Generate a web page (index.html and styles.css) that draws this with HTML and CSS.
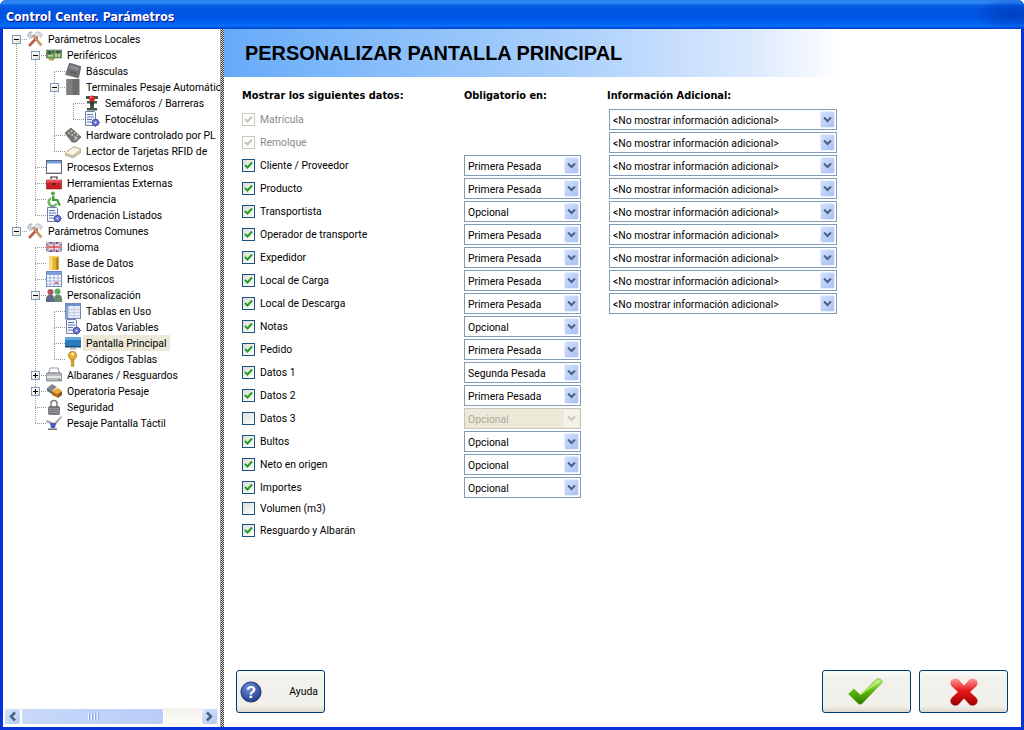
FILE: index.html
```html
<!DOCTYPE html>
<html lang="es">
<head>
  <meta charset="UTF-8">
  <meta name="viewport" content="width=device-width, initial-scale=1.0">
  <title>Control Center. Parámetros</title>
  <link rel="stylesheet" href="styles.css">
</head>
<body>
  <svg class="defs" width="0" height="0">
    <symbol id="i-tools" viewBox="0 0 16 16">
      <path d="M1.500 14 9.500 5.500l1.500 1.500-8 8.500z" fill="#c9573f" stroke="#8c3a2c" stroke-width=".5"/>
      <path d="M5.500 5.500 13.500 15l1.500-1.500L7 4z" fill="#d9a06e" stroke="#93603a" stroke-width=".5"/>
      <path d="M.8 4C.8 1.800 3 .3 5.300 1L3.700 2.800 4.500 4.500 6.300 3.800C6.800 6 4.800 7.500 3 7 1.700 6.600.8 5.500.8 4z" fill="#d4d8dc" stroke="#777d84" stroke-width=".5"/>
      <path d="M7.500 3.500 10.500.8c1.800 0 3.800 1.300 5 3.700l-1.500 1.700-2.500-1.700-1.500 1.500z" fill="#e1e4e8" stroke="#777d84" stroke-width=".5"/>
    </symbol>
    <symbol id="i-board" viewBox="0 0 16 16">
      <path d="M0 3h16v8H8v1.500H3V11H0z" fill="#6f9a68" stroke="#46684a" stroke-width=".5"/>
      <path d="M1.500 4h3.500v3H1.500zM6 4h2v2H6zM10 4h4.500v2H10z" fill="#3f5a46"/>
      <path d="M2 8h5v1.500H2zM9 7h2v3H9zM12 7h2v3h-2z" fill="#c3d58c"/>
      <path d="M3 12h5v1.500H3z" fill="#c9a93a"/>
    </symbol>
    <symbol id="i-scale" viewBox="0 0 16 16">
      <path d="M4.500 0 16 3.500 13.500 15 .5 11.500z" fill="#6f7175" stroke="#4a4c50" stroke-width=".5"/>
      <path d="M5.500 2 14 4.500l-.8 3L4.200 5.500z" fill="#8b8d91"/>
      <path d="M6 8.500h1.500v1.500H6zM9 9.500h1.500V11H9z" fill="#3a3c40"/>
    </symbol>
    <symbol id="i-terminal" viewBox="0 0 16 16">
      <path d="M1.500 0h13v16h-13z" fill="#6d6d6d"/>
      <path d="M1.500 0h6v16h-6z" fill="#7f7f7f"/>
      <rect x="10" y="6" width="1" height="1" fill="#d33"/>
    </symbol>
    <symbol id="i-light" viewBox="0 0 16 16">
      <path d="M2 1h12v3H10v2h3v2.500h-3V13h3v2.500H3V13h3V8.500H3V6h3V4H2z" fill="#46574a"/>
      <circle cx="8" cy="3.500" r="3" fill="#d62020"/>
      <circle cx="7" cy="2.500" r="1" fill="#f08a8a"/>
      <circle cx="8" cy="8.500" r="1.800" fill="#333"/>
    </symbol>
    <symbol id="i-doc" viewBox="0 0 16 16">
      <path d="M1.500 .5h9l1 1v13h-10z" fill="#f3f6fc" stroke="#6c7fa9"/>
      <path d="M3 3h6v1H3zM3 5.500h7v1H3zM3 8h5v1H3zM3 10.500h4v1H3z" fill="#5a74b8"/>
      <circle cx="11.500" cy="11.500" r="3.300" fill="#6a72d0" stroke="#474fa4"/>
      <path d="M11 7h1v2h-1zM11 14h1v2h-1zM7 11h2v1H7zM14 11h2v1h-2z" fill="#5a63c4"/>
      <circle cx="11.500" cy="11.500" r="1" fill="#e4e7fb"/>
    </symbol>
    <symbol id="i-keypad" viewBox="0 0 16 16">
      <path d="M0 6 6 1l10 9-5 5H7z" fill="#7b7773" stroke="#403e3c" stroke-width=".6"/>
      <path d="M3 6l1.300-1 1 1L4 7zM5.500 4l1.300-1 1 1-1.300 1zM6 8l1.300-1 1 1L7 9zM8.500 6l1.300-1 1 1-1.300 1zM9 10l1.300-1 1 1-1.300 1zM11.500 8l1.300-1 1 1-1.300 1z" fill="#dedbd7"/>
      <path d="M9 12.500l3-2.500 1 1-3 2.500z" fill="#c9c5c0"/>
    </symbol>
    <symbol id="i-reader" viewBox="0 0 16 16">
      <path d="M0 10 9 3.500 16 6v3.500l-8 5.500-8-3z" fill="#cfc4a8" stroke="#8e8672" stroke-width=".5"/>
      <path d="M1 10 9 4.500l6 2L8 12z" fill="#f8f4e8"/>
    </symbol>
    <symbol id="i-window" viewBox="0 0 16 16">
      <rect x=".5" y="1.500" width="15" height="13" fill="#fff" stroke="#5e6878"/>
      <rect x="1" y="2" width="14" height="2.500" fill="#6f9bd8"/>
      <rect x="1" y="13" width="14" height="1" fill="#c8ccd4"/>
    </symbol>
    <symbol id="i-toolbox" viewBox="0 0 16 16">
      <path d="M5 4V2h6v2" fill="none" stroke="#2d2d2d" stroke-width="1.200"/>
      <path d="M.5 5h15v9H.5z" fill="#cc1f24" stroke="#8a1216" stroke-width=".6"/>
      <path d="M1 5h14v2.500H1z" fill="#ee5054"/>
      <path d="M6.500 8h3v2h-3z" fill="#333"/>
    </symbol>
    <symbol id="i-wheel" viewBox="0 0 16 16">
      <circle cx="7" cy="2.500" r="2" fill="#5aa84d"/>
      <path d="M6 5h2.500v3H12l3 6.500h-2.500L10.500 10H6z" fill="#3f9a3c"/>
      <path d="M4.500 6.500a5 5 0 1 0 6.500 7l-1-1.300a3.300 3.300 0 1 1-5-4z" fill="#6fb85c" stroke="#2f7f33" stroke-width=".3"/>
    </symbol>
    <symbol id="i-flag" viewBox="0 0 16 16">
      <rect y="3" width="16" height="10" fill="#4a5fa8"/>
      <path d="M0 3 16 13M16 3 0 13" stroke="#fff" stroke-width="2"/>
      <path d="M0 3 16 13M16 3 0 13" stroke="#d2525a" stroke-width=".7"/>
      <path d="M6.500 3h3v10h-3zM0 6.500h16v3H0z" fill="#fff"/>
      <path d="M7.300 3h1.400v10H7.300zM0 7.300h16v1.400H0z" fill="#d2454c"/>
    </symbol>
    <symbol id="i-db" viewBox="0 0 16 16">
      <rect x="3.500" y="1" width="9" height="14" rx="1" fill="#e8b12a"/>
      <rect x="3.500" y="1" width="3" height="14" rx="1" fill="#f9dd82"/>
      <rect x="10.500" y="1" width="2" height="14" rx="1" fill="#a97a14"/>
      <rect x="3.500" y="1" width="9" height="1.500" fill="#f5d26a"/>
    </symbol>
    <symbol id="i-calendar" viewBox="0 0 16 16">
      <rect x=".5" y=".5" width="15" height="15" fill="#fff" stroke="#6f88c0"/>
      <rect x="1" y="1" width="14" height="3" fill="#7f9fe0"/>
      <path d="M1 7h14M1 10h14M1 13h14M4 4v11M8 4v11M12 4v11" stroke="#9db2dd" fill="none"/>
      <rect x="9" y="11" width="3" height="2" fill="#e0605c"/>
    </symbol>
    <symbol id="i-people" viewBox="0 0 16 16">
      <path d="M0 15v-3c0-3 2-4.500 4.500-4.500S8 9 8 12v3z" fill="#5a6a88"/>
      <path d="M8 15v-3c0-3 1.500-4.500 4-4.500s4 1.500 4 4.500v3z" fill="#6b8a6c"/>
      <circle cx="4.500" cy="5" r="3" fill="#b0555e"/>
      <circle cx="11.500" cy="4.500" r="3" fill="#5fae5c"/>
    </symbol>
    <symbol id="i-table" viewBox="0 0 16 16">
      <rect x=".5" y=".5" width="15" height="15" fill="#e6ecf8" stroke="#7088b8"/>
      <rect x="1" y="1" width="14" height="2" fill="#6d8fd0"/>
      <rect x="1" y="3" width="2.500" height="12" fill="#8aa6dc"/>
      <path d="M3.500 6.500h11.500M3.500 9.500h11.500M3.500 12.500h11.500M9 3v12" stroke="#c3cfe6" fill="none"/>
    </symbol>
    <symbol id="i-screen" viewBox="0 0 16 16">
      <rect y="2" width="16" height="10" fill="#2a7cc0"/>
      <rect y="2" width="16" height="3" fill="#68a7dc"/>
      <rect y="11" width="16" height="1.500" fill="#1e4a70"/>
      <rect x="5" y="13" width="6" height="1.500" fill="#b0b4ba"/>
    </symbol>
    <symbol id="i-key" viewBox="0 0 16 16">
      <circle cx="7.500" cy="4.500" r="4.200" fill="#e6b02f" stroke="#96701a" stroke-width=".6"/>
      <circle cx="7.500" cy="3" r="1.200" fill="#fff"/>
      <path d="M6 8h3v7L7.500 16 6 15v-1l1-.8-1-.7 1-.8-1-.7z" fill="#d79f22" stroke="#96701a" stroke-width=".4"/>
    </symbol>
    <symbol id="i-printer" viewBox="0 0 16 16">
      <path d="M4 1h8l1.500 5h-11z" fill="#fff" stroke="#6c7076" stroke-width=".7"/>
      <path d="M1 6h14l1 3v5H0V9z" fill="#b8bcc2" stroke="#5c6066" stroke-width=".6"/>
      <path d="M1 9h14v2H1z" fill="#e4e6ea"/>
      <rect x="12" y="12" width="2" height="1" fill="#38b038"/>
    </symbol>
    <symbol id="i-box" viewBox="0 0 16 16">
      <path d="M1 5 6 1l5 3-5 4z" fill="#85878c"/>
      <path d="M6 8l6-3 4 3-4 3z" fill="#eda83a"/>
      <path d="M6 8l6 3v4l-6-3z" fill="#b76d1e"/>
      <path d="M12 11l4-3v4l-4 3z" fill="#8d5316"/>
      <path d="M1 5l5 3v3L1 8z" fill="#66686d"/>
    </symbol>
    <symbol id="i-lock" viewBox="0 0 16 16">
      <path d="M5 8V4.500a3 3 0 0 1 6 0V8" fill="none" stroke="#7a7d82" stroke-width="1.500"/>
      <rect x="2.500" y="7.500" width="11" height="8" rx="1" fill="#75777b" stroke="#47494c" stroke-width=".5"/>
      <path d="M3 9.500h10M3 11.500h10M3 13.500h10" stroke="#95979b"/>
    </symbol>
    <symbol id="i-touch" viewBox="0 0 16 16">
      <path d="M1 5l7 3 7-7 1 1-7 9-9-4z" fill="#a4a6ac"/>
      <path d="M4 8h6l-1 5H5z" fill="#4a5ab8"/>
      <path d="M2 13.500h9V15H2z" fill="#6d7078"/>
    </symbol>
    <symbol id="i-chevron" viewBox="0 0 9 7">
      <path d="M1 1.500 4.500 5 8 1.500" fill="none" stroke="currentColor" stroke-width="2"/>
    </symbol>
    <symbol id="i-tick" viewBox="0 0 9 9">
      <path d="M1 4 3.500 6.500 8 1.500" fill="none" stroke="currentColor" stroke-width="2"/>
    </symbol>
  </svg>

  <div class="window">
    <div class="titlebar">Control Center. Parámetros</div>
    <div class="frame">

      <aside class="tree-pane">
        <div class="tree-scroll">
          <ul class="tree root">
            <li class="open stem">
              <div class="row"><i class="twisty minus"></i><svg class="ico"><use href="#i-tools"/></svg><span>Parámetros Locales</span></div>
              <ul class="tree">
                <li class="open stem">
                  <div class="row"><i class="twisty minus"></i><svg class="ico"><use href="#i-board"/></svg><span>Periféricos</span></div>
                  <ul class="tree">
                    <li class="stem"><div class="row"><svg class="ico"><use href="#i-scale"/></svg><span>Básculas</span></div></li>
                    <li class="open stem">
                      <div class="row"><i class="twisty minus"></i><svg class="ico"><use href="#i-terminal"/></svg><span>Terminales Pesaje Automátic</span></div>
                      <ul class="tree">
                        <li class="stem"><div class="row"><svg class="ico"><use href="#i-light"/></svg><span>Semáforos / Barreras</span></div></li>
                        <li><div class="row"><svg class="ico"><use href="#i-doc"/></svg><span>Fotocélulas</span></div></li>
                      </ul>
                    </li>
                    <li class="stem"><div class="row"><svg class="ico"><use href="#i-keypad"/></svg><span>Hardware controlado por PL</span></div></li>
                    <li><div class="row"><svg class="ico"><use href="#i-reader"/></svg><span>Lector de Tarjetas RFID de</span></div></li>
                  </ul>
                </li>
                <li class="stem"><div class="row"><svg class="ico"><use href="#i-window"/></svg><span>Procesos Externos</span></div></li>
                <li class="stem"><div class="row"><svg class="ico"><use href="#i-toolbox"/></svg><span>Herramientas Externas</span></div></li>
                <li class="stem"><div class="row"><svg class="ico"><use href="#i-wheel"/></svg><span>Apariencia</span></div></li>
                <li><div class="row"><svg class="ico"><use href="#i-doc"/></svg><span>Ordenación Listados</span></div></li>
              </ul>
            </li>
            <li class="open">
              <div class="row"><i class="twisty minus"></i><svg class="ico"><use href="#i-tools"/></svg><span>Parámetros Comunes</span></div>
              <ul class="tree">
                <li class="stem"><div class="row"><svg class="ico"><use href="#i-flag"/></svg><span>Idioma</span></div></li>
                <li class="stem"><div class="row"><svg class="ico"><use href="#i-db"/></svg><span>Base de Datos</span></div></li>
                <li class="stem"><div class="row"><svg class="ico"><use href="#i-calendar"/></svg><span>Históricos</span></div></li>
                <li class="open stem">
                  <div class="row"><i class="twisty minus"></i><svg class="ico"><use href="#i-people"/></svg><span>Personalización</span></div>
                  <ul class="tree">
                    <li class="stem"><div class="row"><svg class="ico"><use href="#i-table"/></svg><span>Tablas en Uso</span></div></li>
                    <li class="stem"><div class="row"><svg class="ico"><use href="#i-doc"/></svg><span>Datos Variables</span></div></li>
                    <li class="stem"><div class="row selected"><svg class="ico"><use href="#i-screen"/></svg><span>Pantalla Principal</span></div></li>
                    <li><div class="row"><svg class="ico"><use href="#i-key"/></svg><span>Códigos Tablas</span></div></li>
                  </ul>
                </li>
                <li class="stem"><div class="row"><i class="twisty plus"></i><svg class="ico"><use href="#i-printer"/></svg><span>Albaranes / Resguardos</span></div></li>
                <li class="stem"><div class="row"><i class="twisty plus"></i><svg class="ico"><use href="#i-box"/></svg><span>Operatoria Pesaje</span></div></li>
                <li class="stem"><div class="row"><svg class="ico"><use href="#i-lock"/></svg><span>Seguridad</span></div></li>
                <li><div class="row"><svg class="ico"><use href="#i-touch"/></svg><span>Pesaje Pantalla Táctil</span></div></li>
              </ul>
            </li>
          </ul>
        </div>
        <div class="hscroll">
          <button class="sb-btn"><svg width="9" height="11" viewBox="0 0 9 11"><path d="M7 1.500 3 5.500 7 9.500" fill="none" stroke="#4d6185" stroke-width="2.500"/></svg></button>
          <div class="sb-track">
            <div class="sb-thumb"><i></i><i></i><i></i><i></i></div>
          </div>
          <button class="sb-btn"><svg width="9" height="11" viewBox="0 0 9 11"><path d="M2 1.500 6 5.500 2 9.500" fill="none" stroke="#4d6185" stroke-width="2.500"/></svg></button>
        </div>
      </aside>

      <div class="splitter"></div>

      <main class="content">
        <h1 class="banner">PERSONALIZAR PANTALLA PRINCIPAL</h1>

        <div class="col-heads">
          <div class="col-a">Mostrar los siguientes datos:</div>
          <div class="col-b">Obligatorio en:</div>
          <div class="col-c">Información Adicional:</div>
        </div>

        <div class="fields">
          <div class="field">
            <label class="col-a muted"><i class="check off-on"><svg><use href="#i-tick"/></svg></i>Matrícula</label>
            <div class="col-b"></div>
            <div class="col-c"><div class="combo"><span>&lt;No mostrar información adicional&gt;</span><b><svg><use href="#i-chevron"/></svg></b></div></div>
          </div>
          <div class="field">
            <label class="col-a muted"><i class="check off-on"><svg><use href="#i-tick"/></svg></i>Remolque</label>
            <div class="col-b"></div>
            <div class="col-c"><div class="combo"><span>&lt;No mostrar información adicional&gt;</span><b><svg><use href="#i-chevron"/></svg></b></div></div>
          </div>
          <div class="field">
            <label class="col-a"><i class="check on"><svg><use href="#i-tick"/></svg></i>Cliente / Proveedor</label>
            <div class="col-b"><div class="combo"><span>Primera Pesada</span><b><svg><use href="#i-chevron"/></svg></b></div></div>
            <div class="col-c"><div class="combo"><span>&lt;No mostrar información adicional&gt;</span><b><svg><use href="#i-chevron"/></svg></b></div></div>
          </div>
          <div class="field">
            <label class="col-a"><i class="check on"><svg><use href="#i-tick"/></svg></i>Producto</label>
            <div class="col-b"><div class="combo"><span>Primera Pesada</span><b><svg><use href="#i-chevron"/></svg></b></div></div>
            <div class="col-c"><div class="combo"><span>&lt;No mostrar información adicional&gt;</span><b><svg><use href="#i-chevron"/></svg></b></div></div>
          </div>
          <div class="field">
            <label class="col-a"><i class="check on"><svg><use href="#i-tick"/></svg></i>Transportista</label>
            <div class="col-b"><div class="combo"><span>Opcional</span><b><svg><use href="#i-chevron"/></svg></b></div></div>
            <div class="col-c"><div class="combo"><span>&lt;No mostrar información adicional&gt;</span><b><svg><use href="#i-chevron"/></svg></b></div></div>
          </div>
          <div class="field">
            <label class="col-a"><i class="check on"><svg><use href="#i-tick"/></svg></i>Operador de transporte</label>
            <div class="col-b"><div class="combo"><span>Primera Pesada</span><b><svg><use href="#i-chevron"/></svg></b></div></div>
            <div class="col-c"><div class="combo"><span>&lt;No mostrar información adicional&gt;</span><b><svg><use href="#i-chevron"/></svg></b></div></div>
          </div>
          <div class="field">
            <label class="col-a"><i class="check on"><svg><use href="#i-tick"/></svg></i>Expedidor</label>
            <div class="col-b"><div class="combo"><span>Primera Pesada</span><b><svg><use href="#i-chevron"/></svg></b></div></div>
            <div class="col-c"><div class="combo"><span>&lt;No mostrar información adicional&gt;</span><b><svg><use href="#i-chevron"/></svg></b></div></div>
          </div>
          <div class="field">
            <label class="col-a"><i class="check on"><svg><use href="#i-tick"/></svg></i>Local de Carga</label>
            <div class="col-b"><div class="combo"><span>Primera Pesada</span><b><svg><use href="#i-chevron"/></svg></b></div></div>
            <div class="col-c"><div class="combo"><span>&lt;No mostrar información adicional&gt;</span><b><svg><use href="#i-chevron"/></svg></b></div></div>
          </div>
          <div class="field">
            <label class="col-a"><i class="check on"><svg><use href="#i-tick"/></svg></i>Local de Descarga</label>
            <div class="col-b"><div class="combo"><span>Primera Pesada</span><b><svg><use href="#i-chevron"/></svg></b></div></div>
            <div class="col-c"><div class="combo"><span>&lt;No mostrar información adicional&gt;</span><b><svg><use href="#i-chevron"/></svg></b></div></div>
          </div>
          <div class="field">
            <label class="col-a"><i class="check on"><svg><use href="#i-tick"/></svg></i>Notas</label>
            <div class="col-b"><div class="combo"><span>Opcional</span><b><svg><use href="#i-chevron"/></svg></b></div></div>
          </div>
          <div class="field">
            <label class="col-a"><i class="check on"><svg><use href="#i-tick"/></svg></i>Pedido</label>
            <div class="col-b"><div class="combo"><span>Primera Pesada</span><b><svg><use href="#i-chevron"/></svg></b></div></div>
          </div>
          <div class="field">
            <label class="col-a"><i class="check on"><svg><use href="#i-tick"/></svg></i>Datos 1</label>
            <div class="col-b"><div class="combo"><span>Segunda Pesada</span><b><svg><use href="#i-chevron"/></svg></b></div></div>
          </div>
          <div class="field">
            <label class="col-a"><i class="check on"><svg><use href="#i-tick"/></svg></i>Datos 2</label>
            <div class="col-b"><div class="combo"><span>Primera Pesada</span><b><svg><use href="#i-chevron"/></svg></b></div></div>
          </div>
          <div class="field">
            <label class="col-a"><i class="check"></i>Datos 3</label>
            <div class="col-b"><div class="combo disabled"><span>Opcional</span><b><svg><use href="#i-chevron"/></svg></b></div></div>
          </div>
          <div class="field">
            <label class="col-a"><i class="check on"><svg><use href="#i-tick"/></svg></i>Bultos</label>
            <div class="col-b"><div class="combo"><span>Opcional</span><b><svg><use href="#i-chevron"/></svg></b></div></div>
          </div>
          <div class="field">
            <label class="col-a"><i class="check on"><svg><use href="#i-tick"/></svg></i>Neto en origen</label>
            <div class="col-b"><div class="combo"><span>Opcional</span><b><svg><use href="#i-chevron"/></svg></b></div></div>
          </div>
          <div class="field h21">
            <label class="col-a"><i class="check on"><svg><use href="#i-tick"/></svg></i>Importes</label>
            <div class="col-b"><div class="combo"><span>Opcional</span><b><svg><use href="#i-chevron"/></svg></b></div></div>
          </div>
          <div class="field h22">
            <label class="col-a"><i class="check"></i>Volumen (m3)</label>
          </div>
          <div class="field">
            <label class="col-a"><i class="check on"><svg><use href="#i-tick"/></svg></i>Resguardo y Albarán</label>
          </div>
        </div>

        <div class="actions">
          <button class="btn btn-help">
            <svg width="22" height="22" viewBox="0 0 24 24">
              <defs>
                <radialGradient id="g-help" cx=".4" cy=".3" r=".8"><stop offset="0" stop-color="#6f8fdc"/><stop offset="1" stop-color="#17337f"/></radialGradient>
              </defs>
              <circle cx="12" cy="12" r="11" fill="url(#g-help)" stroke="#1b2f70"/>
              <text x="12" y="18" text-anchor="middle" class="help-mark">?</text>
            </svg>
            <span>Ayuda</span>
          </button>
          <div class="actions-right">
            <button class="btn btn-ok">
              <svg width="37" height="29" viewBox="0 0 38 30">
                <defs>
                  <linearGradient id="g-ok" x1="0" y1="0" x2="0" y2="1"><stop offset="0" stop-color="#b6f05e"/><stop offset=".5" stop-color="#5cb80a"/><stop offset="1" stop-color="#2a7a00"/></linearGradient>
                </defs>
                <path d="M1.500 17.500 7 12.500 13.500 18.500 30 2.500C32 .8 36 2 36.500 5.500L15.500 27.500C14.500 28.500 12.500 28.500 11.500 27.500z" fill="url(#g-ok)" stroke="#4c9a0c" stroke-width=".5"/>
                <path d="M14 15.500 30.500 4C32 3 34 3.500 34.500 5L14 19z" fill="#d8f8a8" opacity=".55"/>
              </svg>
            </button>
            <button class="btn">
              <svg width="30" height="28" viewBox="0 0 30 28">
                <defs>
                  <linearGradient id="g-no" x1="0" y1="0" x2="0" y2="1"><stop offset="0" stop-color="#ff9a9a"/><stop offset=".45" stop-color="#e81818"/><stop offset="1" stop-color="#9c0000"/></linearGradient>
                </defs>
                <path d="M1.500 5C1.500 2 4 .5 6.500 .5 8 .5 9 1 10 2L15 7.500 20 2C21 1 22 .5 23.500 .5 26 .5 28.500 2 28.500 5 28.500 6.500 28 7.500 27 8.500L21 14 27 19.500C28 20.500 28.500 21.500 28.500 23 28.500 26 26 27.500 23.500 27.500 22 27.500 21 27 20 26L15 20.500 10 26C9 27 8 27.500 6.500 27.500 4 27.500 1.500 26 1.500 23 1.500 21.500 2 20.500 3 19.500L9 14 3 8.500C2 7.500 1.500 6.500 1.500 5z" fill="url(#g-no)"/>
              </svg>
            </button>
          </div>
        </div>
      </main>
    </div>
  </div>
</body>
</html>
```

FILE: styles.css
```css
* {
  box-sizing: border-box;
}
html, body {
  margin: 0;
  padding: 0;
}
body {
  font-family: Roboto, "Liberation Sans", sans-serif;
  font-size: 10.400px;
  color: #000;
  background: #fff;
}
.defs {
  position: absolute;
}
.window {
  width: 1024px;
  height: 730px;
  display: flex;
  flex-direction: column;
  overflow: hidden;
  background: #0831d9;
  border-radius: 6px 6px 0 0;
}
.titlebar {
  height: 29px;
  flex: none;
  padding: 10px 0 0 6px;
  font-family: "DejaVu Sans Condensed", "DejaVu Sans", sans-serif;
  font-stretch: condensed;
  font-size: 12.200px;
  line-height: 15px;
  font-weight: bold;
  color: #fff;
  text-shadow: 1px 1px 0 #0f1089;
  background:
    radial-gradient(ellipse 40px 16px at 1012px 14px, #0040c0 0, rgba(0, 64, 192, 0) 100%),
    linear-gradient(to bottom, #2b7fee 0, #2f8bf6 3px, #0a62e8 5px, #0055e2 9px, #0054e3 17px, #0062f0 23px, #0a6ff8 26px, #0558e8 27px, #0042cc 29px);
}
.frame {
  flex: 1;
  min-height: 0;
  display: flex;
  padding: 0 3px 3px 3px;
}

/* arbol */
.tree-pane {
  width: 217px;
  flex: none;
  display: flex;
  flex-direction: column;
  background: #fff;
}
.tree-scroll {
  flex: 1;
  min-height: 0;
  overflow: hidden;
  padding: 2px 0 0 0;
}
.tree {
  list-style: none;
  margin: 0;
  padding: 0 0 0 19px;
}
.tree.root {
  padding-left: 13px;
  width: 215px;
}
.tree li {
  position: relative;
}
/* guias punteadas */
.tree li::before {
  content: "";
  position: absolute;
  left: 0;
  top: 8px;
  width: 11px;
  border-top: 1px dotted #9a9a9a;
}
.tree li.stem::after {
  content: "";
  position: absolute;
  left: 0;
  top: 8px;
  bottom: -8px;
  border-left: 1px dotted #9a9a9a;
}
.row {
  position: relative;
  z-index: 1;
  height: 16px;
  display: flex;
  align-items: center;
  padding-left: 11px;
  white-space: nowrap;
}
.row span {
  margin-left: 5px;
  padding-top: 1px;
  line-height: 15px;
}
.row.selected span {
  background: #ece9d8;
  padding: 1px 3px 0;
  margin-left: 2px;
}
.ico {
  width: 16px;
  height: 16px;
  flex: none;
}
.twisty {
  position: absolute;
  left: -4px;
  top: 4px;
  width: 9px;
  height: 9px;
  border: 1px solid #7c9cc0;
  background: linear-gradient(135deg, #fff, #e3e0d4) #fff;
}
.twisty::before {
  content: "";
  position: absolute;
  left: 1px;
  top: 3px;
  width: 5px;
  height: 1px;
  background: #000;
}
.twisty.plus::after {
  content: "";
  position: absolute;
  left: 3px;
  top: 1px;
  width: 1px;
  height: 5px;
  background: #000;
}

/* scrollbar */
.hscroll {
  height: 17px;
  flex: none;
  margin: 0 2px 2px 1px;
  display: flex;
  background: linear-gradient(to bottom, #f3f1ec, #fefefb);
}
.sb-btn {
  width: 17px;
  height: 17px;
  padding: 0;
  border: 1px solid #fff;
  border-radius: 3px;
  background: linear-gradient(135deg, #d8e4fd, #b4c9f5);
  display: flex;
  align-items: center;
  justify-content: center;
}
.sb-track {
  flex: 1;
}
.sb-thumb {
  width: 143px;
  height: 17px;
  border: 1px solid #fff;
  border-radius: 3px;
  background: linear-gradient(to right, #c8d8fb, #b9cdf8);
  display: flex;
  align-items: center;
  justify-content: center;
  gap: 2px;
}
.sb-thumb i {
  width: 1px;
  height: 7px;
  background: #eef3fe;
  box-shadow: 1px 0 0 #8ca8e0;
}
.splitter {
  width: 4px;
  flex: none;
  border-left: 1px solid #a0a0a0;
  background: repeating-conic-gradient(#3a3a3a 0 25%, #d8d8d8 0 50%) 0 0 / 2px 2px;
}

/* panel derecho */
.content {
  flex: 1;
  min-width: 0;
  display: flex;
  flex-direction: column;
  background: #fff;
}
.banner {
  width: 618px;
  height: 48px;
  margin: 0;
  flex: none;
  padding-left: 21px;
  font-family: "Liberation Sans", Arial, sans-serif;
  font-size: 19.900px;
  line-height: 49px;
  font-weight: bold;
  color: #000;
  background: linear-gradient(to right, #66aaf8 0, #7ab6f9 15%, #a9cffb 55%, #dbe9fd 85%, #fff 100%);
}
.col-heads {
  display: flex;
  padding: 12px 0 0 18px;
  height: 32px;
  font-family: "DejaVu Sans Condensed", "DejaVu Sans", sans-serif;
  font-stretch: condensed;
  font-size: 10.900px;
  line-height: 14px;
  font-weight: bold;
}
.col-heads .col-c {
  margin-left: -2px;
}
.fields {
  padding-left: 18px;
}
.field {
  display: flex;
  height: 23px;
}
.field.h21 {
  height: 21px;
}
.field.h22 {
  height: 22px;
}
.col-a {
  width: 222px;
  flex: none;
}
.col-b {
  width: 117px;
  margin-right: 28px;
  flex: none;
}
.col-c {
  width: 228px;
  flex: none;
}
label.col-a {
  display: flex;
  align-items: flex-start;
  padding-top: 4px;
  line-height: 14px;
}
.muted {
  color: #8a8a8a;
}
.check {
  width: 13px;
  height: 13px;
  flex: none;
  margin: 0 5px 0 0;
  border: 1px solid #1c5180;
  background: linear-gradient(135deg, #dcdcd7, #fff);
  display: flex;
  align-items: center;
  justify-content: center;
  color: #21a121;
}
.check svg {
  width: 9px;
  height: 9px;
}
.check.off-on {
  border-color: #cac8bb;
  background: #fff;
  color: #c5c2b5;
}
.combo {
  height: 21px;
  border: 1px solid #7f9db9;
  background: #fff;
  display: flex;
  align-items: center;
  justify-content: space-between;
  padding: 0 1px 0 3px;
}
.combo span {
  padding-top: 1px;
  white-space: nowrap;
  overflow: hidden;
}
.combo b {
  width: 15px;
  height: 17px;
  flex: none;
  display: flex;
  align-items: center;
  justify-content: center;
  color: #4d6185;
  border-radius: 2px;
  background: linear-gradient(135deg, #d3e0fd, #a9c0f5);
  border: 1px solid #e6eefd;
}
.combo b svg {
  width: 9px;
  height: 7px;
}
.combo.disabled {
  border-color: #c9c7ba;
  background: #ece9d8;
  color: #aca899;
}
.combo.disabled b {
  color: #c9c7ba;
  background: #f3f1ea;
  border-color: #f8f7f2;
}

/* botones */
.actions {
  margin-top: auto;
  display: flex;
  justify-content: space-between;
  padding: 0 13px 14px 12px;
}
.actions-right {
  display: flex;
  gap: 8px;
}
.btn {
  width: 89px;
  height: 43px;
  padding: 0;
  display: flex;
  align-items: center;
  justify-content: center;
  border: 1px solid #003c74;
  border-radius: 3px;
  background: linear-gradient(to bottom, #fbfbf8 0, #f2f1eb 20%, #f1f0ea 85%, #dcd8cc 100%);
  font: inherit;
  color: #000;
}
.btn-help {
  justify-content: space-between;
  padding: 0 6px 0 3px;
}
.btn-ok svg {
  margin-right: 2px;
}
.help-mark {
  font: bold 18px "Liberation Sans", Arial, sans-serif;
  fill: #fff;
}
```
